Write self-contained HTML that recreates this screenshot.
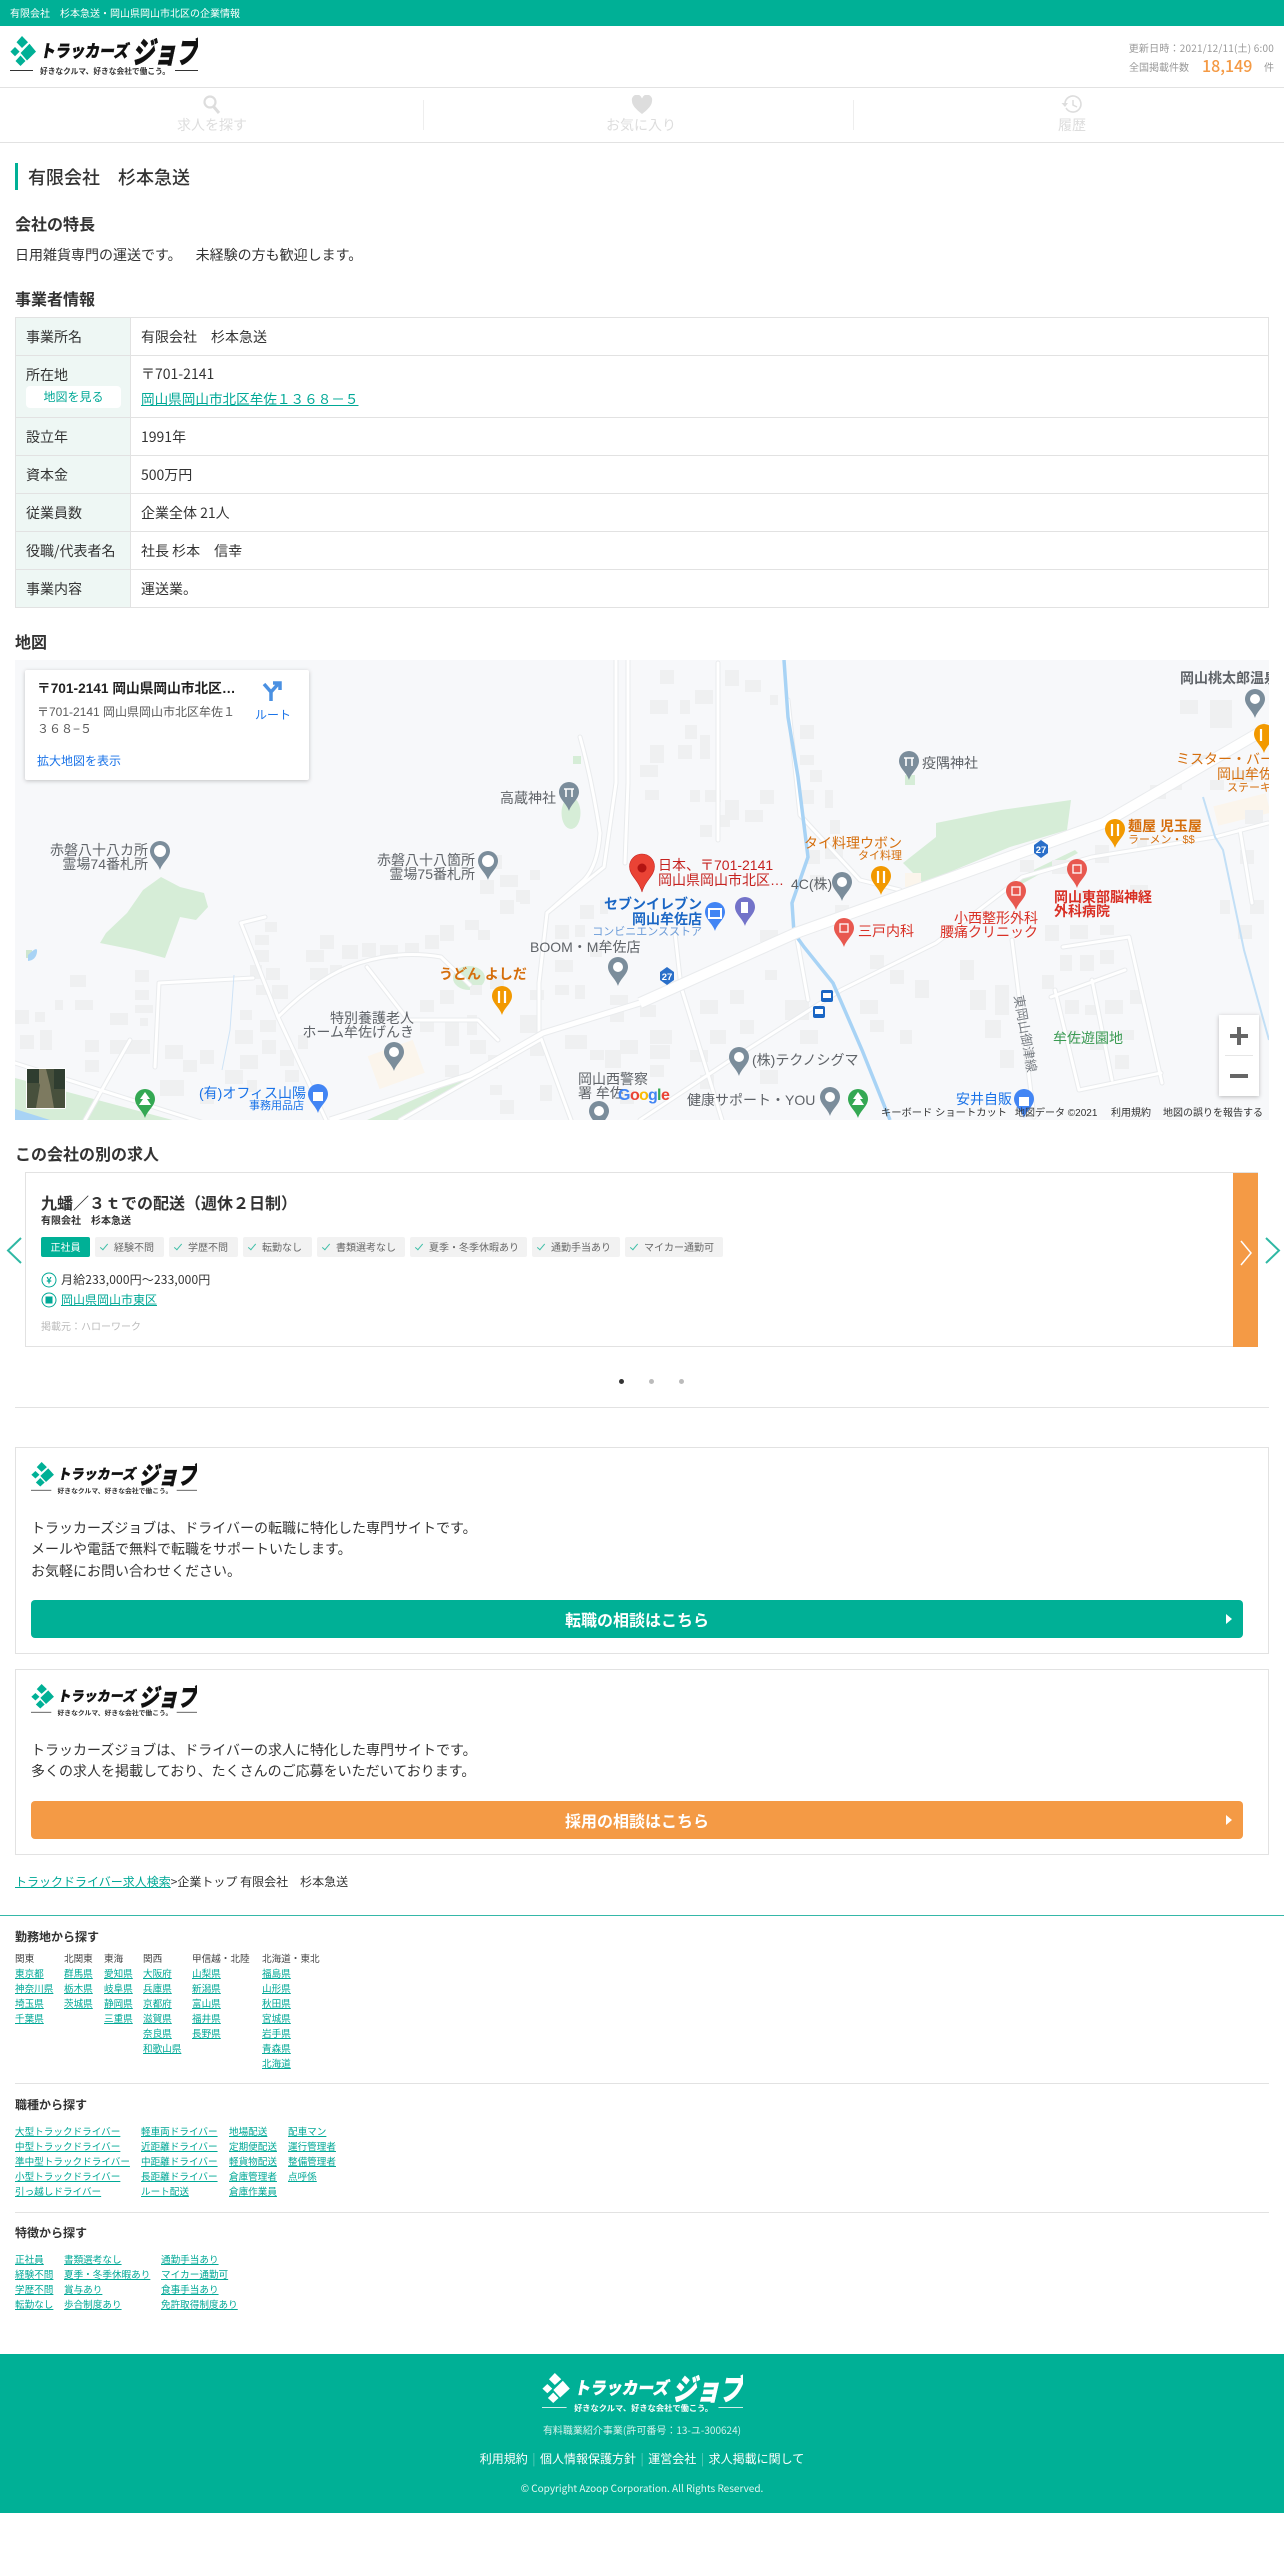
<!DOCTYPE html>
<html lang="ja"><head><meta charset="utf-8"><title>有限会社 杉本急送の企業情報</title>
<style>
html,body{margin:0;padding:0;background:#fff}
body{position:relative;width:1284px;height:2568px;overflow:hidden;font-family:"Noto Sans CJK JP","Liberation Sans",sans-serif;color:#333;font-size:14px;text-spacing-trim:space-all}
.a{position:absolute;white-space:nowrap;line-height:20px}
.h{font-size:16px;font-weight:700;left:15px;color:#333}
a{color:#00a896;text-decoration:underline}
.box{position:absolute;box-sizing:border-box;left:15px;width:1254px;border:1px solid #e2e2e2;background:#fff}
.line{position:absolute;background:#e2e2e2;height:1px}
.btn{position:absolute;left:31px;width:1212px;height:38px;border-radius:4px;color:#fff;font-size:16px;font-weight:700;line-height:38px;text-align:center}
.btn i{position:absolute;left:1195px;top:14px;width:0;height:0;border-left:6px solid #fff;border-top:5px solid transparent;border-bottom:5px solid transparent}
table{position:absolute;left:15px;top:317px;width:1254px;border-collapse:collapse;table-layout:fixed}
td,th{border:1px solid #e2e2e2;padding:0 10px;font-weight:400;text-align:left;font-size:14px;line-height:20px;vertical-align:middle}
th{background:#eef7f4;width:94px}
.tag{position:absolute;top:1237px;height:20px;line-height:20px;background:#f2f2f2;border-radius:2px;font-size:10px;color:#666;white-space:nowrap;box-sizing:border-box;padding-left:19px}
.tag::before{content:"";position:absolute;left:7px;top:5px;width:3px;height:7px;border:solid #3fbfa8;border-width:0 1px 1px 0;transform:rotate(40deg)}
.col{position:absolute;font-size:9.6px;line-height:15px;white-space:nowrap;color:#444}
.col a{display:block;width:max-content}
.f3{font-size:12px;font-weight:700;left:15px}
.nav{position:absolute;top:115px;font-size:14px;color:#ddd;width:160px;text-align:center;line-height:20px}
svg{display:block}
</style></head><body>

<div style="position:absolute;left:0;top:0;width:1284px;height:26px;background:#00b096"></div>
<div class="a" style="left:10px;top:3px;font-size:10px;color:#fff">有限会社　杉本急送・岡山県岡山市北区の企業情報</div>

<svg style="position:absolute;left:10px;top:36px" width="188" height="44" viewBox="0 0 188 44">
<g fill="#00b096"><polygon points="12,0 18,6.200 12,12 6.500,6.200"/><polygon points="5,11 9.600,15.600 5,20.200 0.400,15.600"/><polygon points="19.500,7.800 26,15.600 17,24.500 10.600,17"/><polygon points="10.500,19.500 15.500,25 10.500,30 5.500,25"/></g>
<text transform="translate(30 21) skewX(-10)" font-size="17" font-weight="900" fill="#111" stroke="#111" stroke-width=".4" textLength="88" lengthAdjust="spacingAndGlyphs">トラッカーズ</text>
<text transform="translate(122 27) skewX(-12)" font-size="30" font-weight="900" fill="#111" stroke="#111" stroke-width=".5" textLength="66" lengthAdjust="spacingAndGlyphs">ジョブ</text>
<path d="M0 34.500H23M165 34.500H188" stroke="#333" stroke-width="1"/>
<text x="30" y="38" font-size="8" font-weight="700" fill="#333" textLength="130" lengthAdjust="spacingAndGlyphs">好きなクルマ、好きな会社で働こう。</text>
</svg>

<div class="a" style="right:10px;top:38px;font-size:10px;color:#999;letter-spacing:.2px">更新日時：2021/12/11(土) 6:00</div>
<div class="a" style="left:1129px;top:57px;font-size:10px;color:#999">全国掲載件数</div>
<div class="a" style="left:1202px;top:55px;font-size:16px;font-weight:500;color:#f49a45">18,149</div>
<div class="a" style="left:1264px;top:57px;font-size:10px;color:#999">件</div>

<div class="line" style="left:0;top:87px;width:1284px"></div>
<div class="line" style="left:0;top:142px;width:1284px"></div>
<div style="position:absolute;left:423px;top:100px;width:1px;height:30px;background:#eee"></div>
<div style="position:absolute;left:853px;top:100px;width:1px;height:30px;background:#eee"></div>
<svg style="position:absolute;left:200px;top:95px" width="24" height="20" viewBox="0 0 24 20"><circle cx="10" cy="7" r="5.500" fill="none" stroke="#ddd" stroke-width="2.200"/><path d="M13.500 11.500L19 18" stroke="#ddd" stroke-width="3"/></svg>
<svg style="position:absolute;left:631px;top:95px" width="22" height="20" viewBox="0 0 22 20"><path d="M11 19C3 13 1 9 1 6A5 5 0 0 1 11 3.500 5 5 0 0 1 21 6C21 9 19 13 11 19Z" fill="#ddd"/></svg>
<svg style="position:absolute;left:1060px;top:95px" width="24" height="20" viewBox="0 0 24 20"><path d="M6 13A8 8 0 1 0 5 8" fill="none" stroke="#ddd" stroke-width="1.600"/><path d="M1.500 8H8L5 12Z" fill="#ddd"/><path d="M13 5V10L17 12" fill="none" stroke="#ddd" stroke-width="1.500"/></svg>
<div class="nav" style="left:132px">求人を探す</div>
<div class="nav" style="left:561px">お気に入り</div>
<div class="nav" style="left:992px">履歴</div>

<div style="position:absolute;left:15px;top:163px;width:3px;height:27px;background:#00b096"></div>
<div class="a" style="left:28px;top:164px;font-size:18px;font-weight:500;line-height:26px;color:#333">有限会社　杉本急送</div>
<div class="a h" style="top:213px">会社の特長</div>
<div class="a" style="left:15px;top:245px">日用雑貨専門の運送です。　未経験の方も歓迎します。</div>
<div class="a h" style="top:288px">事業者情報</div>

<table>
<tr style="height:38px"><th>事業所名</th><td>有限会社　杉本急送</td></tr>
<tr style="height:62px"><th style="vertical-align:top;position:relative"><div style="position:absolute;left:10px;top:9px">所在地</div><div style="position:absolute;left:10px;top:30px;width:95px;height:22px;background:#fff;border-radius:4px;text-align:center;line-height:22px;font-size:12px;color:#00a896">地図を見る</div></th><td style="line-height:24px">〒701-2141<br><a href="#" style="font-size:13.600px">岡山県岡山市北区牟佐１３６８－５</a></td></tr>
<tr style="height:38px"><th>設立年</th><td>1991年</td></tr>
<tr style="height:38px"><th>資本金</th><td>500万円</td></tr>
<tr style="height:38px"><th>従業員数</th><td>企業全体 21人</td></tr>
<tr style="height:38px"><th>役職/代表者名</th><td>社長 杉本　信幸</td></tr>
<tr style="height:38px"><th>事業内容</th><td>運送業。</td></tr>
</table>

<div class="a h" style="top:631px">地図</div>

<svg style="position:absolute;left:15px;top:660px" width="1254" height="460" viewBox="15 660 1254 460" font-family="'Liberation Sans','Noto Sans CJK JP',sans-serif">
<defs>
<path id="pin" d="M0 18C-2 11-10 6-10 -1A10 10 0 1 1 10 -1C10 6 2 11 0 18Z"/>
<g id="r" fill="none" stroke-linejoin="round" stroke-linecap="round">
<path d="M15 1063L204 1123"/>
<path d="M241 923L278 1017L326 1120"/>
<path d="M241 923L265 917"/>
<path d="M278 1017Q320 975 359 963Q400 950 441 957L470 985"/>
<path d="M367 967L408 1020L478 1020L498 1040"/>
<path d="M253 978L159 983L155 1067"/>
<path d="M130 1040L85 1120"/>
<path d="M580 737Q592 780 600 833Q598 865 584 880L547 913L539 983V1033L571 1120"/>
<path d="M616 660V783L604 867L547 913"/>
<path d="M628 660V783L625 863"/>
<path d="M640 1120L726 1063L841 990L936 943L1022 877L1092 857L1215 837L1268 823"/>
<path d="M718 663V840"/>
<path d="M675 933L681 987L722 1120"/>
<path d="M1012 940L1034 1117"/>
<path d="M1051 997L1125 970"/>
<path d="M1063 947L1129 937L1162 1083"/>
<path d="M1055 990L1079 1090L1161 1073"/>
<path d="M1092 980L1112 1080"/>
<path d="M1240 830L1252 903"/>
<path d="M796 933L808 1000"/>
<path d="M540 1040L400 1120"/>
<path d="M860 880L800 815L788 700"/>
<path d="M900 890L860 880"/>
</g>
</defs>
<rect x="15" y="660" width="1254" height="460" fill="#f7f8fa"/>
<!-- parks -->
<g fill="#d6edd7">
<path d="M161 877L180 887L204 893L208 907L196 920L180 917L165 958L135 950L100 943L106 933L127 913L143 890Z"/>
<path d="M936 823L1001 810L1071 800L1067 830L1010 847L923 883L903 863L936 837Z"/>
<ellipse cx="571" cy="813" rx="9.500" ry="16"/>
<ellipse cx="469" cy="978" rx="16" ry="12"/>
<rect x="905" y="775" width="10" height="10"/>
<rect x="573" y="756" width="8" height="8"/>
<path d="M15 1078L210 1130H15Z"/>
<path d="M367 1120L475 1073L478 1076L400 1120Z"/>
<path d="M1017 878L1075 850L1078 853L1020 885Z"/>
</g>
<rect x="26" y="950" width="6" height="8" fill="#cfe6cf"/>
<g fill="#fbf5ec"><rect x="372" y="1047" width="48" height="35" transform="rotate(-20 396 1064)"/><rect x="1215" y="800" width="54" height="20" transform="rotate(-14 1240 810)"/><rect x="905" y="873" width="16" height="14"/></g>
<path d="M15 1109L50 1120H15Z" fill="#a8d3f5"/>
<path d="M28 955Q38 945 37 952Q36 960 28 961Z" fill="#a8d3f5"/>
<!-- buildings -->
<path fill="#eff0f1" d="M255 935h14v10h-14zM265 922h12v10h-12zM255 950h14v12h-14zM266 968h14v12h-14zM272 985h16v14h-16zM250 965h12v14h-12zM256 985h12v10h-12zM306 950h18v12h-18zM320 935h14v14h-14zM342 945h16v14h-16zM362 943h14v14h-14zM380 945h18v14h-18zM405 943h14v12h-14zM425 935h14v14h-14zM330 965h12v8h-12zM310 968h18v12h-18zM70 975h16v12h-16zM135 970h14v12h-14zM135 990h14v10h-14zM135 1005h18v8h-18zM15 1010h14v14h-14zM35 1012h10v10h-10zM55 1000h8v10h-8zM75 1000h18v10h-18zM110 1013h18v12h-18zM140 1018h8v8h-8zM20 1035h14v14h-14zM40 1030h12v20h-12zM85 1040h14v12h-14zM110 1040h40v14h-40zM85 1060h14v12h-14zM240 1010h12v10h-12zM235 1030h18v14h-18zM260 1020h16v12h-16zM262 1040h14v14h-14zM240 1055h18v14h-18zM165 1045h18v14h-18zM183 1060h14v12h-14zM200 1050h14v14h-14zM225 1070h18v14h-18zM247 1080h10v12h-10zM280 1050h14v16h-14zM285 1070h14v12h-14zM298 1035h10v14h-10zM160 1080h24v16h-24zM200 1090h14v14h-14zM420 1000h14v12h-14zM440 990h14v14h-14zM470 985h12v10h-12zM490 975h14v14h-14zM420 1020h14v12h-14zM445 1022h14v24h-14zM467 1015h10v20h-10zM470 1040h16v14h-16zM520 1015h18v18h-18zM530 990h14v10h-14zM445 1065h14v12h-14zM488 1055h10v14h-10zM530 1042h14v14h-14zM440 925h14v16h-14zM465 920h14v10h-14zM478 930h12v10h-12zM500 900h14v14h-14zM520 890h10v14h-10zM480 880h14v14h-14zM500 875h18v12h-18zM530 870h10v10h-10zM490 855h12v14h-12zM516 890h10v12h-10zM580 905h14v14h-14zM600 900h8v14h-8zM555 925h14v14h-14zM575 925h10v12h-10zM590 945h12v12h-12zM555 960h18v12h-18zM555 985h14v10h-14zM575 985h10v14h-10zM610 995h18v10h-18zM610 1010h14v12h-14zM640 1005h16v12h-16zM620 1040h18v14h-18zM565 1035h22v14h-22zM590 1050h14v10h-14zM540 1085h12v16h-12zM490 1085h12v10h-12zM500 1100h14v14h-14zM605 1050h16v18h-16zM650 1045h20v14h-20zM650 1065h14v12h-14zM620 1090h14v14h-14zM660 670h14v14h-14zM695 690h18v14h-18zM725 670h14v16h-14zM745 680h16v12h-16zM770 695h8v10h-8zM650 700h18v14h-18zM680 700h10v14h-10zM685 725h12v14h-12zM700 735h10v24h-10zM650 745h14v18h-14zM678 745h14v14h-14zM640 765h18v12h-18zM645 790h14v10h-14zM690 790h10v12h-10zM705 790h16v12h-16zM725 800h14v20h-14zM745 810h18v12h-18zM760 790h14v14h-14zM700 825h12v12h-12zM720 815h10v12h-10zM800 725h14v14h-14zM800 755h14v10h-14zM800 790h14v14h-14zM810 770h12v12h-12zM825 790h8v18h-8zM830 820h10v14h-10zM806 850h14v14h-14zM825 845h18v14h-18zM810 875h14v14h-14zM835 905h14v12h-14zM760 930h18v12h-18zM765 970h12v10h-12zM730 990h14v14h-14zM700 1000h18v14h-18zM740 1020h14v14h-14zM650 1030h22v14h-22zM710 1030h16v14h-16zM690 1050h18v12h-18zM700 1075h14v14h-14zM760 1070h18v14h-18zM785 1000h24v20h-24zM800 1030h18v14h-18zM870 955h14v14h-14zM890 970h14v14h-14zM915 980h14v18h-14zM860 1000h18v14h-18zM870 1020h14v12h-14zM900 1030h12v14h-12zM960 960h14v20h-14zM970 990h16v20h-16zM995 985h14v30h-14zM985 1020h16v18h-16zM1000 1050h14v18h-14zM1042 975h12v14h-12zM1060 955h12v16h-12zM1080 955h14v16h-14zM1100 950h14v14h-14zM1045 925h14v16h-14zM1070 925h18v14h-18zM1100 925h14v10h-14zM1065 1000h14v14h-14zM1085 1005h14v10h-14zM1065 1030h14v14h-14zM1090 1040h14v10h-14zM1105 1000h18v14h-18zM1120 1030h14v10h-14zM1115 1055h14v14h-14zM1130 990h14v14h-14zM1180 700h18v14h-18zM1210 700h22v28h-22zM1195 755h14v14h-14zM1150 785h16v14h-16zM1170 780h12v10h-12zM1235 770h18v12h-18zM1245 810h18v14h-18zM1210 780h14v10h-14zM1240 850h14v14h-14zM1250 900h14v14h-14zM1220 900h10v14h-10zM1238 925h14v14h-14zM1020 860h14v12h-14zM1052 860h18v14h-18zM1075 890h16v24h-16zM1095 895h14v12h-14zM1130 885h18v14h-18zM1095 845h14v18h-14zM1137 840h10v10h-10z"/>
<use href="#r" stroke="#e9ebed" stroke-width="5"/>
<use href="#r" stroke="#fff" stroke-width="3"/>
<!-- water -->
<path d="M784 660L788 717L798 777L808 857L792 903L794 933L804 947L833 983L862 1050L890 1120" fill="none" stroke="#a8d3f5" stroke-width="3.500"/>
<path d="M1203 797L1215 837L1223 850L1244 950L1269 1040" fill="none" stroke="#c2dff6" stroke-width="2"/>
<path d="M234 975L230 1030L222 1070" fill="none" stroke="#cfe3f6" stroke-width="1"/>
<!-- main road -->
<path d="M1269 727L1104 823L796 933L640 1003" fill="none" stroke="#e9ebed" stroke-width="12"/>
<path d="M640 1003L543 1033L470 1075L330 1120" fill="none" stroke="#e9ebed" stroke-width="7"/>
<path d="M1269 727L1104 823L796 933L640 1003" fill="none" stroke="#fff" stroke-width="10"/>
<path d="M640 1003L543 1033L470 1075L330 1120" fill="none" stroke="#fff" stroke-width="5"/>
<!-- pins -->
<use href="#pin" x="569" y="793" fill="#7b8d9b"/><path d="M564 789h10M566 789v8M572 789v8" stroke="#fff" stroke-width="1.600"/>
<use href="#pin" x="160" y="852" fill="#7b8d9b"/><circle cx="160" cy="851" r="6" fill="#fff"/>
<use href="#pin" x="488" y="862" fill="#7b8d9b"/><circle cx="488" cy="861" r="6" fill="#fff"/>
<use href="#pin" x="618" y="968" fill="#7b8d9b"/><circle cx="618" cy="967" r="5" fill="#fff"/>
<use href="#pin" x="394" y="1053" fill="#7b8d9b"/><circle cx="394" cy="1052" r="5" fill="#fff"/>
<use href="#pin" x="842" y="883" fill="#7b8d9b"/><circle cx="842" cy="882" r="5" fill="#fff"/>
<use href="#pin" x="909" y="762" fill="#7b8d9b"/><path d="M904 758h10M906 758v8M912 758v8" stroke="#fff" stroke-width="1.600"/>
<use href="#pin" x="1255" y="700" fill="#7b8d9b"/><circle cx="1255" cy="699" r="5" fill="#fff"/>
<use href="#pin" x="739" y="1058" fill="#7b8d9b"/><circle cx="739" cy="1057" r="5" fill="#fff"/>
<use href="#pin" x="830" y="1098" fill="#7b8d9b"/><circle cx="830" cy="1097" r="5" fill="#fff"/>
<use href="#pin" x="599" y="1112" fill="#7b8d9b"/><circle cx="599" cy="1111" r="5" fill="#fff"/>
<g fill="#f29900">
<use href="#pin" x="502" y="997"/><use href="#pin" x="881" y="877"/><use href="#pin" x="1115" y="830"/><use href="#pin" x="1264" y="735"/>
</g>
<path d="M499 991v12M505 991v12M878 871v12M884 871v12M1112 824v12M1118 824v12M1261 729v12" stroke="#fff" stroke-width="2.200"/>
<g fill="#e8584f"><use href="#pin" x="844" y="929"/><use href="#pin" x="1016" y="892"/><use href="#pin" x="1077" y="870"/></g>
<g fill="none" stroke="#fff" stroke-width="1.300"><rect x="840" y="924" width="8" height="8"/><rect x="1012" y="887" width="8" height="8"/><rect x="1073" y="865" width="8" height="8"/></g>
<g fill="#4285f4"><use href="#pin" x="715" y="913"/><use href="#pin" x="318" y="1095"/><use href="#pin" x="1024" y="1100"/></g>
<rect x="709" y="909" width="12" height="9" fill="none" stroke="#fff" stroke-width="2"/>
<path d="M313 1092h10v9h-10z" fill="#fff"/><path d="M1019 1097h10v9h-10z" fill="#fff"/>
<use href="#pin" x="745" y="908" fill="#7373c9"/><rect x="741" y="902" width="7" height="11" fill="#fff"/>
<g fill="#34a853"><use href="#pin" x="145" y="1100"/><use href="#pin" x="858" y="1100"/></g>
<path d="M145 1092l5 7h-3l4 6h-12l4-6h-3zM858 1092l5 7h-3l4 6h-12l4-6h-3z" fill="#fff"/>
<g fill="#2a6fc9"><path d="M1034 845l7-5 7 5v8l-7 5-7-5z"/><path d="M660 972l7-5 7 5v8l-7 5-7-5z"/></g>
<g font-size="9.500" fill="#fff" text-anchor="middle" font-weight="700"><text x="1041" y="853">27</text><text x="667" y="980">27</text></g>
<g fill="#1a66c4"><rect x="821" y="990" width="12" height="12" rx="2"/><rect x="813" y="1006" width="12" height="12" rx="2"/></g>
<rect x="823" y="993" width="8" height="5" fill="#fff"/><rect x="815" y="1009" width="8" height="5" fill="#fff"/>
<!-- main marker -->
<path d="M642 892C639 880 629.500 876 629.500 866.500A12.500 12.500 0 1 1 654.500 866.500C654.500 876 645 880 642 892Z" fill="#ea4335" stroke="#c5221f" stroke-width=".6"/>
<circle cx="642" cy="868" r="4.500" fill="#b31412"/>
<!-- labels -->
<g font-size="14" fill="#5f6368">
<text x="556" y="803" text-anchor="end">高蔵神社</text>
<text x="148" y="855" text-anchor="end">赤磐八十八カ所</text><text x="148" y="869" text-anchor="end">霊場74番札所</text>
<text x="475" y="865" text-anchor="end">赤磐八十八箇所</text><text x="475" y="879" text-anchor="end">霊場75番札所</text>
<text x="530" y="952">BOOM・M牟佐店</text>
<text x="414" y="1023" text-anchor="end">特別養護老人</text><text x="414" y="1037" text-anchor="end">ホーム牟佐げんき</text>
<text x="578" y="1084">岡山西警察</text><text x="578" y="1098">署 牟佐</text>
<text x="791" y="889">4C(株)</text>
<text x="922" y="768">疫隅神社</text>
<text x="752" y="1065">(株)テクノシグマ</text>
<text x="687" y="1105">健康サポート・YOU</text>
<text x="1180" y="683" font-weight="700">岡山桃太郎温泉</text>
</g>
<g font-size="14" fill="#1a73e8"><text x="199" y="1098">(有)オフィス山陽</text><text x="956" y="1104">安井自販</text></g>
<text x="304" y="1109" text-anchor="end" font-size="11" fill="#1a73e8">事務用品店</text>
<g font-size="14" fill="#1a66c4" font-weight="700" text-anchor="end"><text x="702" y="909">セブンイレブン</text><text x="702" y="924">岡山牟佐店</text></g>
<text x="702" y="935" font-size="11" fill="#6b9bd8" text-anchor="end">コンビニエンスストア</text>
<g font-size="14" fill="#c5221f"><text x="658" y="870">日本、〒701-2141</text><text x="658" y="885">岡山県岡山市北区…</text></g>
<g fill="#d56e0c"><text x="439" y="979" font-size="14" font-weight="700">うどん よしだ</text>
<text x="902" y="848" font-size="14" text-anchor="end">タイ料理ウボン</text><text x="902" y="859" font-size="11" text-anchor="end">タイ料理</text>
<text x="1128" y="831" font-size="14" font-weight="700">麺屋 児玉屋</text><text x="1128" y="843" font-size="11">ラーメン・$$</text>
<text x="1176" y="764" font-size="14">ミスター・バード</text><text x="1217" y="779" font-size="14">岡山牟佐店</text><text x="1227" y="791" font-size="11">ステーキ</text></g>
<g font-size="14" fill="#d93025"><text x="858" y="936">三戸内科</text><text x="1038" y="923" text-anchor="end">小西整形外科</text><text x="1038" y="937" text-anchor="end">腰痛クリニック</text>
<text x="1054" y="902" font-weight="700">岡山東部脳神経</text><text x="1054" y="916" font-weight="700">外科病院</text></g>
<text x="1053" y="1043" font-size="14" fill="#3a9a52">牟佐遊園地</text>
<text transform="translate(1014 996) rotate(80)" font-size="13" fill="#7a7f85">東岡山御津線</text>
<g font-size="16" font-weight="700"><text x="618" y="1100" fill="#4285f4">G</text><text x="630" y="1100" fill="#ea4335">o</text><text x="639" y="1100" fill="#fbbc05">o</text><text x="648" y="1100" fill="#4285f4">g</text><text x="657" y="1100" fill="#34a853">l</text><text x="661" y="1100" fill="#ea4335">e</text></g>
<!-- footer attribution -->
<g font-size="10" fill="#333"><text x="881" y="1116" textLength="126" lengthAdjust="spacingAndGlyphs">キーボード ショートカット</text><text x="1015" y="1116">地図データ ©2021</text><text x="1111" y="1116">利用規約</text><text x="1163" y="1116">地図の誤りを報告する</text></g>
<!-- zoom control -->
<rect x="1219" y="1015" width="40" height="81" fill="#fff" filter="drop-shadow(0 1px 2px rgba(0,0,0,.25))"/>
<path d="M1225 1055.500H1253" stroke="#e6e6e6"/>
<path d="M1239 1027V1045M1230 1036H1248M1230 1076H1248" stroke="#666" stroke-width="4"/>
<!-- thumbnail -->
<rect x="26" y="1068" width="40" height="41" fill="#fff" rx="2"/>
<rect x="27" y="1069" width="38" height="39" fill="#47503c"/>
<path d="M32 1069L40 1085L36 1108H54L50 1085L46 1069Z" fill="#7d7a60"/>
<path d="M27 1069h12v14h-12zM54 1069h11v20h-11z" fill="#2f3d30"/>
<!-- info card -->
<rect x="25" y="670" width="284" height="110" fill="#fff" rx="2" filter="drop-shadow(0 1px 2px rgba(0,0,0,.22))"/>
<text x="37" y="693" font-size="13.700" fill="#222" font-weight="700">〒701-2141 岡山県岡山市北区…</text>
<text x="37" y="716" font-size="12" fill="#5b5b5b">〒701-2141 岡山県岡山市北区牟佐１</text>
<text x="37" y="733" font-size="12" fill="#5b5b5b">３６８−５</text>
<text x="37" y="765" font-size="12" fill="#1a73e8">拡大地図を表示</text>
<text x="255" y="719" font-size="12" fill="#1a73e8">ルート</text>
<path d="M271 701V692L264 684M271 692L279 683M273 683H280V690" fill="none" stroke="#4a90e2" stroke-width="3.500"/>
</svg>

<div class="a h" style="top:1143px">この会社の別の求人</div>
<svg style="position:absolute;left:5px;top:1236px" width="18" height="30" viewBox="0 0 18 30"><path d="M16 2L3 14.500L16 27" fill="none" stroke="#2fb8a4" stroke-width="2"/></svg>
<svg style="position:absolute;left:1264px;top:1236px" width="18" height="30" viewBox="0 0 18 30"><path d="M2 2L15 14.500L2 27" fill="none" stroke="#2fb8a4" stroke-width="2"/></svg>
<div class="box" style="left:25px;top:1172px;width:1233px;height:175px"></div>
<div style="position:absolute;left:1233px;top:1173px;width:25px;height:174px;background:#f49a45"></div>
<svg style="position:absolute;left:1238px;top:1240px" width="16" height="26" viewBox="0 0 16 26"><path d="M3 1L13 13L3 25" fill="none" stroke="#fff" stroke-width="1.500"/></svg>
<div class="a" style="left:41px;top:1192px;font-size:16px;font-weight:700">九蟠／３ｔでの配送（週休２日制）</div>
<div class="a" style="left:41px;top:1210px;font-size:10px;font-weight:700">有限会社　杉本急送</div>
<div class="tag" style="left:41px;width:49px;background:#00b096;color:#fff;padding:0;text-align:center;font-size:10px" id="t0">正社員</div>
<div class="tag" style="left:95px;width:69px">経験不問</div>
<div class="tag" style="left:169px;width:69px">学歴不問</div>
<div class="tag" style="left:243px;width:69px">転勤なし</div>
<div class="tag" style="left:317px;width:88px">書類選考なし</div>
<div class="tag" style="left:410px;width:117px">夏季・冬季休暇あり</div>
<div class="tag" style="left:532px;width:88px">通勤手当あり</div>
<div class="tag" style="left:625px;width:98px">マイカー通勤可</div>
<style>#t0::before{display:none}</style>
<svg style="position:absolute;left:41px;top:1271px" width="16" height="38" viewBox="0 0 16 38" font-size="9" fill="#00a896" text-anchor="middle" font-weight="700"><circle cx="8" cy="9" r="7" fill="none" stroke="#00a896"/><text x="8" y="12.500">¥</text><circle cx="8" cy="29" r="7" fill="none" stroke="#00a896"/><rect x="4.500" y="25.500" width="7" height="7" fill="#00a896"/></svg>
<div class="a" style="left:61px;top:1270px;font-size:12px;letter-spacing:.15px">月給233,000円～233,000円</div>
<div class="a" style="left:61px;top:1290px;font-size:12px"><a href="#">岡山県岡山市東区</a></div>
<div class="a" style="left:41px;top:1316px;font-size:10px;color:#bbb">掲載元：ハローワーク</div>
<div style="position:absolute;left:619px;top:1379px;width:5px;height:5px;border-radius:50%;background:#333"></div>
<div style="position:absolute;left:649px;top:1379px;width:5px;height:5px;border-radius:50%;background:#bbb"></div>
<div style="position:absolute;left:679px;top:1379px;width:5px;height:5px;border-radius:50%;background:#bbb"></div>
<div class="line" style="left:15px;top:1407px;width:1254px"></div>

<div class="box" style="top:1447px;height:207px"></div>
<svg style="position:absolute;left:31px;top:1462px" width="166" height="36" viewBox="0 0 188 44" preserveAspectRatio="none">
<g fill="#00b096"><polygon points="12,0 18,6.200 12,12 6.500,6.200"/><polygon points="5,11 9.600,15.600 5,20.200 0.400,15.600"/><polygon points="19.500,7.800 26,15.600 17,24.500 10.600,17"/><polygon points="10.500,19.500 15.500,25 10.500,30 5.500,25"/></g>
<text transform="translate(30 21) skewX(-10)" font-size="17" font-weight="900" fill="#111" stroke="#111" stroke-width=".4" textLength="88" lengthAdjust="spacingAndGlyphs">トラッカーズ</text>
<text transform="translate(122 27) skewX(-12)" font-size="30" font-weight="900" fill="#111" stroke="#111" stroke-width=".5" textLength="66" lengthAdjust="spacingAndGlyphs">ジョブ</text>
<path d="M0 34.500H23M165 34.500H188" stroke="#333" stroke-width="1"/>
<text x="30" y="38" font-size="8" font-weight="700" fill="#333" textLength="130" lengthAdjust="spacingAndGlyphs">好きなクルマ、好きな会社で働こう。</text>
</svg>
<div class="a" style="left:31px;top:1518px">トラッカーズジョブは、ドライバーの転職に特化した専門サイトです。</div>
<div class="a" style="left:31px;top:1539px">メールや電話で無料で転職をサポートいたします。</div>
<div class="a" style="left:31px;top:1561px">お気軽にお問い合わせください。</div>
<div class="btn" style="top:1600px;background:#00b096">転職の相談はこちら<i></i></div>

<div class="box" style="top:1669px;height:186px"></div>
<svg style="position:absolute;left:31px;top:1684px" width="166" height="36" viewBox="0 0 188 44" preserveAspectRatio="none">
<g fill="#00b096"><polygon points="12,0 18,6.200 12,12 6.500,6.200"/><polygon points="5,11 9.600,15.600 5,20.200 0.400,15.600"/><polygon points="19.500,7.800 26,15.600 17,24.500 10.600,17"/><polygon points="10.500,19.500 15.500,25 10.500,30 5.500,25"/></g>
<text transform="translate(30 21) skewX(-10)" font-size="17" font-weight="900" fill="#111" stroke="#111" stroke-width=".4" textLength="88" lengthAdjust="spacingAndGlyphs">トラッカーズ</text>
<text transform="translate(122 27) skewX(-12)" font-size="30" font-weight="900" fill="#111" stroke="#111" stroke-width=".5" textLength="66" lengthAdjust="spacingAndGlyphs">ジョブ</text>
<path d="M0 34.500H23M165 34.500H188" stroke="#333" stroke-width="1"/>
<text x="30" y="38" font-size="8" font-weight="700" fill="#333" textLength="130" lengthAdjust="spacingAndGlyphs">好きなクルマ、好きな会社で働こう。</text>
</svg>
<div class="a" style="left:31px;top:1740px">トラッカーズジョブは、ドライバーの求人に特化した専門サイトです。</div>
<div class="a" style="left:31px;top:1761px">多くの求人を掲載しており、たくさんのご応募をいただいております。</div>
<div class="btn" style="top:1801px;background:#f49a45">採用の相談はこちら<i></i></div>

<div class="a" style="left:15px;top:1872px;font-size:12px"><a href="#">トラックドライバー求人検索</a>&gt;企業トップ 有限会社　杉本急送</div>

<div style="position:absolute;left:0;top:1915px;width:1284px;height:1px;background:#35b8a8"></div>
<div class="a f3" style="top:1927px">勤務地から探す</div>
<div class="col" style="left:15px;top:1951px">関東<a href="#">東京都</a><a href="#">神奈川県</a><a href="#">埼玉県</a><a href="#">千葉県</a></div>
<div class="col" style="left:64px;top:1951px">北関東<a href="#">群馬県</a><a href="#">栃木県</a><a href="#">茨城県</a></div>
<div class="col" style="left:104px;top:1951px">東海<a href="#">愛知県</a><a href="#">岐阜県</a><a href="#">静岡県</a><a href="#">三重県</a></div>
<div class="col" style="left:143px;top:1951px">関西<a href="#">大阪府</a><a href="#">兵庫県</a><a href="#">京都府</a><a href="#">滋賀県</a><a href="#">奈良県</a><a href="#">和歌山県</a></div>
<div class="col" style="left:192px;top:1951px">甲信越・北陸<a href="#">山梨県</a><a href="#">新潟県</a><a href="#">富山県</a><a href="#">福井県</a><a href="#">長野県</a></div>
<div class="col" style="left:262px;top:1951px">北海道・東北<a href="#">福島県</a><a href="#">山形県</a><a href="#">秋田県</a><a href="#">宮城県</a><a href="#">岩手県</a><a href="#">青森県</a><a href="#">北海道</a></div>
<div class="line" style="left:15px;top:2083px;width:1254px"></div>
<div class="a f3" style="top:2095px">職種から探す</div>
<div class="col" style="left:15px;top:2124px"><a href="#">大型トラックドライバー</a><a href="#">中型トラックドライバー</a><a href="#">準中型トラックドライバー</a><a href="#">小型トラックドライバー</a><a href="#">引っ越しドライバー</a></div>
<div class="col" style="left:141px;top:2124px"><a href="#">軽車両ドライバー</a><a href="#">近距離ドライバー</a><a href="#">中距離ドライバー</a><a href="#">長距離ドライバー</a><a href="#">ルート配送</a></div>
<div class="col" style="left:229px;top:2124px"><a href="#">地場配送</a><a href="#">定期便配送</a><a href="#">軽貨物配送</a><a href="#">倉庫管理者</a><a href="#">倉庫作業員</a></div>
<div class="col" style="left:288px;top:2124px"><a href="#">配車マン</a><a href="#">運行管理者</a><a href="#">整備管理者</a><a href="#">点呼係</a></div>
<div class="line" style="left:15px;top:2212px;width:1254px"></div>
<div class="a f3" style="top:2223px">特徴から探す</div>
<div class="col" style="left:15px;top:2252px"><a href="#">正社員</a><a href="#">経験不問</a><a href="#">学歴不問</a><a href="#">転勤なし</a></div>
<div class="col" style="left:64px;top:2252px"><a href="#">書類選考なし</a><a href="#">夏季・冬季休暇あり</a><a href="#">賞与あり</a><a href="#">歩合制度あり</a></div>
<div class="col" style="left:161px;top:2252px"><a href="#">通勤手当あり</a><a href="#">マイカー通勤可</a><a href="#">食事手当あり</a><a href="#">免許取得制度あり</a></div>

<div style="position:absolute;left:0;top:2354px;width:1284px;height:159px;background:#00b096"></div>
<svg style="position:absolute;left:542px;top:2373px" width="201" height="44" viewBox="0 0 188 44" preserveAspectRatio="none">
<g fill="#fff"><polygon points="12,0 18,6.200 12,12 6.500,6.200"/><polygon points="5,11 9.600,15.600 5,20.200 0.400,15.600"/><polygon points="19.500,7.800 26,15.600 17,24.500 10.600,17"/><polygon points="10.500,19.500 15.500,25 10.500,30 5.500,25"/></g>
<text transform="translate(30 21) skewX(-10)" font-size="17" font-weight="900" fill="#fff" stroke="#fff" stroke-width=".4" textLength="88" lengthAdjust="spacingAndGlyphs">トラッカーズ</text>
<text transform="translate(122 27) skewX(-12)" font-size="30" font-weight="900" fill="#fff" stroke="#fff" stroke-width=".5" textLength="66" lengthAdjust="spacingAndGlyphs">ジョブ</text>
<path d="M0 34.500H23M165 34.500H188" stroke="#cfeee8" stroke-width="1"/>
<text x="30" y="38" font-size="8" font-weight="700" fill="#fff" textLength="130" lengthAdjust="spacingAndGlyphs">好きなクルマ、好きな会社で働こう。</text>
</svg>
<div class="a" style="left:0;width:1284px;text-align:center;top:2420px;font-size:10px;color:#d5f1ec">有料職業紹介事業(許可番号：13-ユ-300624)</div>
<div class="a" style="left:0;width:1284px;text-align:center;top:2449px;font-size:12px;color:#fff">利用規約<span style="color:#5fcdbb;margin:0 4.500px">|</span>個人情報保護方針<span style="color:#5fcdbb;margin:0 4.500px">|</span>運営会社<span style="color:#5fcdbb;margin:0 4.500px">|</span>求人掲載に関して</div>
<div class="a" style="left:0;width:1284px;text-align:center;top:2478px;font-size:10px;color:#e4f6f2">© Copyright Azoop Corporation. All Rights Reserved.</div>
</body></html>
